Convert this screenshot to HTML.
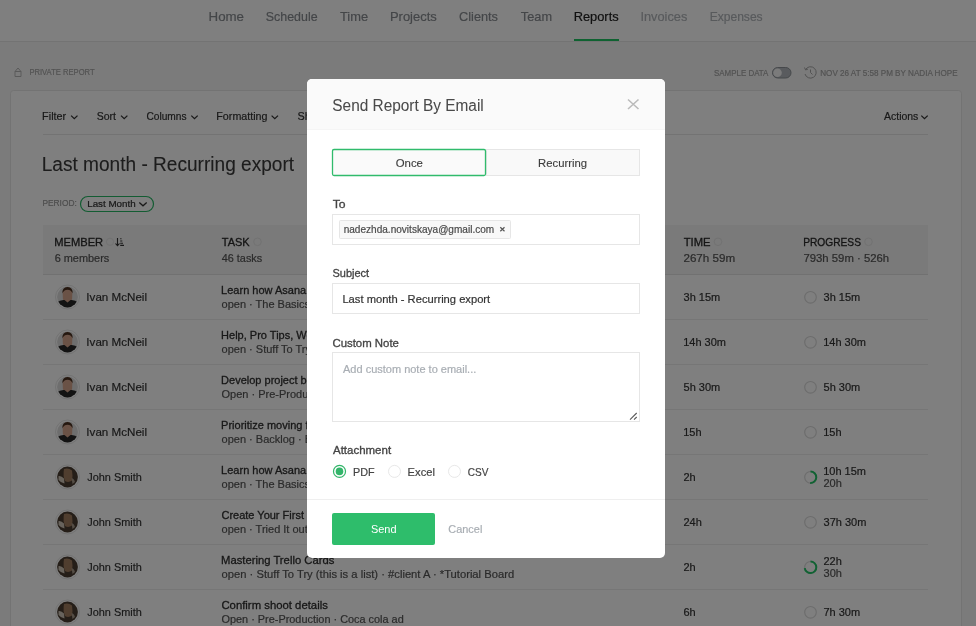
<!DOCTYPE html>
<html><head><meta charset="utf-8"><style>
html,body{margin:0;padding:0;width:976px;height:626px;overflow:hidden;background:#7a7a7a;font-family:"Liberation Sans",sans-serif;}
svg{display:block;will-change:transform}
</style></head><body>
<svg width="976" height="626" viewBox="0 0 976 626" font-family="Liberation Sans, sans-serif"><defs><clipPath id="avc"><circle r="10.4"/></clipPath></defs><rect x="0" y="0" width="976" height="626" fill="#f7f7f7"/>
<rect x="0" y="0" width="976" height="41" fill="#ffffff"/>
<rect x="0" y="41" width="976" height="1" fill="#e6e6e6"/>
<text x="208.54" y="21" font-size="13" fill="#888c91" font-weight="normal" textLength="35.50" lengthAdjust="spacingAndGlyphs" stroke="#888c91" stroke-width="0.2">Home</text>
<text x="265.84" y="21" font-size="13" fill="#888c91" font-weight="normal" textLength="51.72" lengthAdjust="spacingAndGlyphs" stroke="#888c91" stroke-width="0.2">Schedule</text>
<text x="339.94" y="21" font-size="13" fill="#888c91" font-weight="normal" textLength="28.14" lengthAdjust="spacingAndGlyphs" stroke="#888c91" stroke-width="0.2">Time</text>
<text x="389.96" y="21" font-size="13" fill="#888c91" font-weight="normal" textLength="46.82" lengthAdjust="spacingAndGlyphs" stroke="#888c91" stroke-width="0.2">Projects</text>
<text x="459.06" y="21" font-size="13" fill="#888c91" font-weight="normal" textLength="38.90" lengthAdjust="spacingAndGlyphs" stroke="#888c91" stroke-width="0.2">Clients</text>
<text x="520.84" y="21" font-size="13" fill="#888c91" font-weight="normal" textLength="31.19" lengthAdjust="spacingAndGlyphs" stroke="#888c91" stroke-width="0.2">Team</text>
<text x="573.67" y="21" font-size="13" fill="#222222" font-weight="normal" textLength="45.00" lengthAdjust="spacingAndGlyphs" stroke="#222222" stroke-width="0.2">Reports</text>
<text x="640.45" y="21" font-size="13" fill="#b0b4b9" font-weight="normal" textLength="46.88" lengthAdjust="spacingAndGlyphs" stroke="#b0b4b9" stroke-width="0.2">Invoices</text>
<text x="709.63" y="21" font-size="13" fill="#b0b4b9" font-weight="normal" textLength="53.01" lengthAdjust="spacingAndGlyphs" stroke="#b0b4b9" stroke-width="0.2">Expenses</text>
<rect x="574" y="39" width="45" height="2" fill="#1fc462"/>
<text x="29.39" y="75.3" font-size="8.5" fill="#a5a5a5" font-weight="normal" textLength="65.28" lengthAdjust="spacingAndGlyphs" stroke="#a5a5a5" stroke-width="0.2">PRIVATE REPORT</text>
<g fill="none" stroke="#b5b5b5" stroke-width="1"><path d="M15 71.5 L18 68 L21 71.5 V76.5 H15Z M15 71.5 H21"/></g>
<text x="714.04" y="76" font-size="8.5" fill="#a5a5a5" font-weight="normal" textLength="54.39" lengthAdjust="spacingAndGlyphs" stroke="#a5a5a5" stroke-width="0.2">SAMPLE DATA</text>
<rect x="772.5" y="67.5" width="18.5" height="10.5" rx="5.25" fill="#b2b7bc" stroke="#8c9196" stroke-width="1"/><circle cx="777.5" cy="72.75" r="4.3" fill="#f6f6f6"/>
<g fill="none" stroke="#a5a5a5" stroke-width="1"><path d="M805.6 69.5 A5.7 5.7 0 1 1 805 74"/><path d="M804.5 67.5 L805.6 70 L808 69"/><path d="M810.5 69.5 V72.5 L812.5 74.5"/></g>
<text x="820.25" y="76" font-size="8.5" fill="#a5a5a5" font-weight="normal" textLength="137.29" lengthAdjust="spacingAndGlyphs" stroke="#a5a5a5" stroke-width="0.2">NOV 26 AT 5:58 PM BY NADIA HOPE</text>
<rect x="10.5" y="90.5" width="951" height="600" rx="3" fill="#ffffff" stroke="#e6e6e6" stroke-width="1"/>
<text x="42.13" y="120" font-size="10.8" fill="#333333" font-weight="normal" textLength="24.05" lengthAdjust="spacingAndGlyphs" stroke="#333333" stroke-width="0.2">Filter</text>
<path d="M71.1 115.6 L74.3 118.7 L77.5 115.6" fill="none" stroke="#333" stroke-width="1.3"/>
<text x="96.73" y="120" font-size="10.8" fill="#333333" font-weight="normal" textLength="19.27" lengthAdjust="spacingAndGlyphs" stroke="#333333" stroke-width="0.2">Sort</text>
<path d="M121.0 115.6 L124.2 118.7 L127.4 115.6" fill="none" stroke="#333" stroke-width="1.3"/>
<text x="146.39" y="120" font-size="10.8" fill="#333333" font-weight="normal" textLength="40.17" lengthAdjust="spacingAndGlyphs" stroke="#333333" stroke-width="0.2">Columns</text>
<path d="M191.3 115.6 L194.5 118.7 L197.7 115.6" fill="none" stroke="#333" stroke-width="1.3"/>
<text x="216.34" y="120" font-size="10.8" fill="#333333" font-weight="normal" textLength="51.15" lengthAdjust="spacingAndGlyphs" stroke="#333333" stroke-width="0.2">Formatting</text>
<path d="M271.6 115.6 L274.8 118.7 L278.0 115.6" fill="none" stroke="#333" stroke-width="1.3"/>
<text x="884.00" y="120" font-size="10.8" fill="#333333" font-weight="normal" textLength="34.36" lengthAdjust="spacingAndGlyphs" stroke="#333333" stroke-width="0.2">Actions</text>
<path d="M921.3 115.6 L924.5 118.7 L927.7 115.6" fill="none" stroke="#333" stroke-width="1.3"/>
<text x="297.51" y="120" font-size="10.8" fill="#333333" font-weight="normal" stroke="#333333" stroke-width="0.2">Sh</text>
<rect x="43" y="134" width="885" height="1" fill="#e6e6e6"/>
<text x="41.67" y="171" font-size="19.5" fill="#3a3a3a" font-weight="normal" textLength="252.49" lengthAdjust="spacingAndGlyphs" stroke="#3a3a3a" stroke-width="0.1">Last month - Recurring export</text>
<text x="42.43" y="206" font-size="8.7" fill="#9a9a9a" font-weight="normal" textLength="34.34" lengthAdjust="spacingAndGlyphs" stroke="#9a9a9a" stroke-width="0.2">PERIOD:</text>
<rect x="80.5" y="196.5" width="73" height="15" rx="7.5" fill="#ffffff" stroke="#26b864" stroke-width="1.2"/>
<text x="87.22" y="206.6" font-size="9.6" fill="#333333" font-weight="normal" textLength="48.44" lengthAdjust="spacingAndGlyphs" stroke="#333333" stroke-width="0.2">Last Month</text>
<path d="M139.3 202.6 L143 205.8 L146.7 202.6" fill="none" stroke="#333" stroke-width="1.3"/>
<rect x="43" y="225" width="885" height="49" fill="#f4f4f4"/>
<rect x="43" y="274" width="885" height="1" fill="#e3e3e3"/>
<text x="54.31" y="245.6" font-size="11.8" fill="#2a2a2a" font-weight="normal" textLength="48.84" lengthAdjust="spacingAndGlyphs" stroke="#2a2a2a" stroke-width="0.32">MEMBER</text>
<circle cx="110" cy="241.8" r="3.6" fill="none" stroke="#e4e4e4" stroke-width="1"/>
<path d="M117.5 238 V245.5 M115.5 243.5 L117.5 245.7 L119.5 243.5" fill="none" stroke="#333" stroke-width="1.1"/><path d="M120.2 238.8 H121.5 M120.2 241 H122.3 M120.2 243.2 H123 M120.2 245.4 H124" stroke="#333" stroke-width="1.1"/>
<circle cx="257.5" cy="241.8" r="3.8" fill="none" stroke="#e4e4e4" stroke-width="1"/>
<circle cx="718" cy="241.8" r="3.8" fill="none" stroke="#e4e4e4" stroke-width="1"/>
<circle cx="868.5" cy="241.8" r="3.8" fill="none" stroke="#e4e4e4" stroke-width="1"/>
<text x="54.65" y="262.3" font-size="11" fill="#555555" font-weight="normal" textLength="54.65" lengthAdjust="spacingAndGlyphs" stroke="#555555" stroke-width="0.2">6 members</text>
<text x="221.78" y="245.6" font-size="11.8" fill="#2a2a2a" font-weight="normal" textLength="27.86" lengthAdjust="spacingAndGlyphs" stroke="#2a2a2a" stroke-width="0.32">TASK</text>
<text x="221.78" y="262.3" font-size="11" fill="#555555" font-weight="normal" textLength="40.39" lengthAdjust="spacingAndGlyphs" stroke="#555555" stroke-width="0.2">46 tasks</text>
<text x="683.68" y="245.6" font-size="11.8" fill="#2a2a2a" font-weight="normal" textLength="26.82" lengthAdjust="spacingAndGlyphs" stroke="#2a2a2a" stroke-width="0.32">TIME</text>
<text x="683.42" y="262" font-size="11" fill="#555555" font-weight="normal" textLength="51.82" lengthAdjust="spacingAndGlyphs" stroke="#555555" stroke-width="0.2">267h 59m</text>
<text x="803.18" y="245.6" font-size="11.8" fill="#2a2a2a" font-weight="normal" textLength="57.81" lengthAdjust="spacingAndGlyphs" stroke="#2a2a2a" stroke-width="0.32">PROGRESS</text>
<text x="803.43" y="262" font-size="11" fill="#555555" font-weight="normal" textLength="85.72" lengthAdjust="spacingAndGlyphs" stroke="#555555" stroke-width="0.2">793h 59m · 526h</text>
<g transform="translate(67.5 297)">
<circle r="12" fill="#ffffff" stroke="#e6e6e6" stroke-width="1"/>
<g clip-path="url(#avc)"><rect x="-11" y="-11" width="22" height="22" fill="#dcdcdc"/><path d="M-4.8 -3 Q-5 -9.5 0 -9.8 Q5 -9.5 4.8 -3 L4.6 2 Q3.5 5.2 0 5.5 Q-3.5 5.2 -4.6 2Z" fill="#d4a48c"/><path d="M-5 -3.5 Q-5.5 -10 0 -10 Q5.5 -10 5 -3.5 Q4 -7 0 -7.3 Q-4 -7 -5 -3.5Z" fill="#4a3020"/><path d="M-11 11 L-11 6 Q-8 2.5 -3 3 L0 5.5 L3 3 Q8 2.5 11 6 L11 11Z" fill="#262626"/></g>
</g>
<text x="86.36" y="301" font-size="11.8" fill="#333333" font-weight="normal" textLength="60.64" lengthAdjust="spacingAndGlyphs" stroke="#333333" stroke-width="0.2">Ivan McNeil</text>
<text x="221.12" y="294" font-size="11" fill="#303030" font-weight="normal" stroke="#303030" stroke-width="0.3">Learn how Asana works</text>
<text x="221.56" y="308" font-size="11" fill="#555555" font-weight="normal" stroke="#555555" stroke-width="0.2">open · The Basics · Asana</text>
<text x="683.56" y="301" font-size="11" fill="#333333" font-weight="normal" stroke="#333333" stroke-width="0.2">3h 15m</text>
<circle cx="810.5" cy="297.3" r="5.8" fill="none" stroke="#dadada" stroke-width="1.2"/>
<text x="823.56" y="301" font-size="11" fill="#333333" font-weight="normal" stroke="#333333" stroke-width="0.2">3h 15m</text>
<rect x="43" y="319" width="885" height="1" fill="#ededed"/>
<g transform="translate(67.5 342)">
<circle r="12" fill="#ffffff" stroke="#e6e6e6" stroke-width="1"/>
<g clip-path="url(#avc)"><rect x="-11" y="-11" width="22" height="22" fill="#dcdcdc"/><path d="M-4.8 -3 Q-5 -9.5 0 -9.8 Q5 -9.5 4.8 -3 L4.6 2 Q3.5 5.2 0 5.5 Q-3.5 5.2 -4.6 2Z" fill="#d4a48c"/><path d="M-5 -3.5 Q-5.5 -10 0 -10 Q5.5 -10 5 -3.5 Q4 -7 0 -7.3 Q-4 -7 -5 -3.5Z" fill="#4a3020"/><path d="M-11 11 L-11 6 Q-8 2.5 -3 3 L0 5.5 L3 3 Q8 2.5 11 6 L11 11Z" fill="#262626"/></g>
</g>
<text x="86.36" y="346" font-size="11.8" fill="#333333" font-weight="normal" textLength="60.64" lengthAdjust="spacingAndGlyphs" stroke="#333333" stroke-width="0.2">Ivan McNeil</text>
<text x="221.12" y="339" font-size="11" fill="#303030" font-weight="normal" stroke="#303030" stroke-width="0.3">Help, Pro Tips, Workflows</text>
<text x="221.56" y="353" font-size="11" fill="#555555" font-weight="normal" stroke="#555555" stroke-width="0.2">open · Stuff To Try · Asana</text>
<text x="683.17" y="346" font-size="11" fill="#333333" font-weight="normal" stroke="#333333" stroke-width="0.2">14h 30m</text>
<circle cx="810.5" cy="342.3" r="5.8" fill="none" stroke="#dadada" stroke-width="1.2"/>
<text x="823.17" y="346" font-size="11" fill="#333333" font-weight="normal" stroke="#333333" stroke-width="0.2">14h 30m</text>
<rect x="43" y="364" width="885" height="1" fill="#ededed"/>
<g transform="translate(67.5 387)">
<circle r="12" fill="#ffffff" stroke="#e6e6e6" stroke-width="1"/>
<g clip-path="url(#avc)"><rect x="-11" y="-11" width="22" height="22" fill="#dcdcdc"/><path d="M-4.8 -3 Q-5 -9.5 0 -9.8 Q5 -9.5 4.8 -3 L4.6 2 Q3.5 5.2 0 5.5 Q-3.5 5.2 -4.6 2Z" fill="#d4a48c"/><path d="M-5 -3.5 Q-5.5 -10 0 -10 Q5.5 -10 5 -3.5 Q4 -7 0 -7.3 Q-4 -7 -5 -3.5Z" fill="#4a3020"/><path d="M-11 11 L-11 6 Q-8 2.5 -3 3 L0 5.5 L3 3 Q8 2.5 11 6 L11 11Z" fill="#262626"/></g>
</g>
<text x="86.36" y="391" font-size="11.8" fill="#333333" font-weight="normal" textLength="60.64" lengthAdjust="spacingAndGlyphs" stroke="#333333" stroke-width="0.2">Ivan McNeil</text>
<text x="221.12" y="384" font-size="11" fill="#303030" font-weight="normal" stroke="#303030" stroke-width="0.3">Develop project brief</text>
<text x="221.50" y="398" font-size="11" fill="#555555" font-weight="normal" stroke="#555555" stroke-width="0.2">Open · Pre-Production · Coca</text>
<text x="683.56" y="391" font-size="11" fill="#333333" font-weight="normal" stroke="#333333" stroke-width="0.2">5h 30m</text>
<circle cx="810.5" cy="387.3" r="5.8" fill="none" stroke="#dadada" stroke-width="1.2"/>
<text x="823.56" y="391" font-size="11" fill="#333333" font-weight="normal" stroke="#333333" stroke-width="0.2">5h 30m</text>
<rect x="43" y="409" width="885" height="1" fill="#ededed"/>
<g transform="translate(67.5 432)">
<circle r="12" fill="#ffffff" stroke="#e6e6e6" stroke-width="1"/>
<g clip-path="url(#avc)"><rect x="-11" y="-11" width="22" height="22" fill="#dcdcdc"/><path d="M-4.8 -3 Q-5 -9.5 0 -9.8 Q5 -9.5 4.8 -3 L4.6 2 Q3.5 5.2 0 5.5 Q-3.5 5.2 -4.6 2Z" fill="#d4a48c"/><path d="M-5 -3.5 Q-5.5 -10 0 -10 Q5.5 -10 5 -3.5 Q4 -7 0 -7.3 Q-4 -7 -5 -3.5Z" fill="#4a3020"/><path d="M-11 11 L-11 6 Q-8 2.5 -3 3 L0 5.5 L3 3 Q8 2.5 11 6 L11 11Z" fill="#262626"/></g>
</g>
<text x="86.36" y="436" font-size="11.8" fill="#333333" font-weight="normal" textLength="60.64" lengthAdjust="spacingAndGlyphs" stroke="#333333" stroke-width="0.2">Ivan McNeil</text>
<text x="221.12" y="429" font-size="11" fill="#303030" font-weight="normal" stroke="#303030" stroke-width="0.3">Prioritize moving forward</text>
<text x="221.56" y="443" font-size="11" fill="#555555" font-weight="normal" stroke="#555555" stroke-width="0.2">open · Backlog · Board</text>
<text x="683.17" y="436" font-size="11" fill="#333333" font-weight="normal" stroke="#333333" stroke-width="0.2">15h</text>
<circle cx="810.5" cy="432.3" r="5.8" fill="none" stroke="#dadada" stroke-width="1.2"/>
<text x="823.17" y="436" font-size="11" fill="#333333" font-weight="normal" stroke="#333333" stroke-width="0.2">15h</text>
<rect x="43" y="454" width="885" height="1" fill="#ededed"/>
<g transform="translate(67.5 477)">
<circle r="12" fill="#ffffff" stroke="#e6e6e6" stroke-width="1"/>
<g clip-path="url(#avc)"><rect x="-11" y="-11" width="22" height="22" fill="#4a3c30"/><path d="M-3.5 -8 Q1 -9.5 4.5 -6.5 Q5.5 -1 4.5 3.5 Q1 6 -2.5 4 Q-4.8 -1 -3.5 -8Z" fill="#a07c5e"/><path d="M-9 -1 Q-6 -1.5 -3.5 1.5 L-3 6.5 Q-6.5 6 -9 3Z" fill="#d0c6b8"/><path d="M4 1 Q6.5 1.5 7.5 5 L5 7 Z" fill="#a89a8a"/></g>
</g>
<text x="87.24" y="481" font-size="11.8" fill="#333333" font-weight="normal" textLength="54.50" lengthAdjust="spacingAndGlyphs" stroke="#333333" stroke-width="0.2">John Smith</text>
<text x="221.12" y="474" font-size="11" fill="#303030" font-weight="normal" stroke="#303030" stroke-width="0.3">Learn how Asana works</text>
<text x="221.56" y="488" font-size="11" fill="#555555" font-weight="normal" stroke="#555555" stroke-width="0.2">open · The Basics · Asana</text>
<text x="683.45" y="481" font-size="11" fill="#333333" font-weight="normal" stroke="#333333" stroke-width="0.2">2h</text>
<circle cx="810.5" cy="477.3" r="5.8" fill="none" stroke="#dadada" stroke-width="1.2"/>
<path d="M810.5 471.50 A5.8 5.8 0 1 1 810.14 483.09" fill="none" stroke="#22c466" stroke-width="2"/>
<text x="823.17" y="474.7" font-size="11" fill="#333333" font-weight="normal" stroke="#333333" stroke-width="0.2">10h 15m</text>
<text x="823.45" y="486.5" font-size="11" fill="#555555" font-weight="normal" stroke="#555555" stroke-width="0.2">20h</text>
<rect x="43" y="499" width="885" height="1" fill="#ededed"/>
<g transform="translate(67.5 522)">
<circle r="12" fill="#ffffff" stroke="#e6e6e6" stroke-width="1"/>
<g clip-path="url(#avc)"><rect x="-11" y="-11" width="22" height="22" fill="#4a3c30"/><path d="M-3.5 -8 Q1 -9.5 4.5 -6.5 Q5.5 -1 4.5 3.5 Q1 6 -2.5 4 Q-4.8 -1 -3.5 -8Z" fill="#a07c5e"/><path d="M-9 -1 Q-6 -1.5 -3.5 1.5 L-3 6.5 Q-6.5 6 -9 3Z" fill="#d0c6b8"/><path d="M4 1 Q6.5 1.5 7.5 5 L5 7 Z" fill="#a89a8a"/></g>
</g>
<text x="87.24" y="526" font-size="11.8" fill="#333333" font-weight="normal" textLength="54.50" lengthAdjust="spacingAndGlyphs" stroke="#333333" stroke-width="0.2">John Smith</text>
<text x="221.45" y="519" font-size="11" fill="#303030" font-weight="normal" stroke="#303030" stroke-width="0.3">Create Your First Board</text>
<text x="221.56" y="533" font-size="11" fill="#555555" font-weight="normal" stroke="#555555" stroke-width="0.2">open · Tried It out · Board</text>
<text x="683.45" y="526" font-size="11" fill="#333333" font-weight="normal" stroke="#333333" stroke-width="0.2">24h</text>
<circle cx="810.5" cy="522.3" r="5.8" fill="none" stroke="#dadada" stroke-width="1.2"/>
<text x="823.56" y="526" font-size="11" fill="#333333" font-weight="normal" stroke="#333333" stroke-width="0.2">37h 30m</text>
<rect x="43" y="544" width="885" height="1" fill="#ededed"/>
<g transform="translate(67.5 567)">
<circle r="12" fill="#ffffff" stroke="#e6e6e6" stroke-width="1"/>
<g clip-path="url(#avc)"><rect x="-11" y="-11" width="22" height="22" fill="#4a3c30"/><path d="M-3.5 -8 Q1 -9.5 4.5 -6.5 Q5.5 -1 4.5 3.5 Q1 6 -2.5 4 Q-4.8 -1 -3.5 -8Z" fill="#a07c5e"/><path d="M-9 -1 Q-6 -1.5 -3.5 1.5 L-3 6.5 Q-6.5 6 -9 3Z" fill="#d0c6b8"/><path d="M4 1 Q6.5 1.5 7.5 5 L5 7 Z" fill="#a89a8a"/></g>
</g>
<text x="87.24" y="571" font-size="11.8" fill="#333333" font-weight="normal" textLength="54.50" lengthAdjust="spacingAndGlyphs" stroke="#333333" stroke-width="0.2">John Smith</text>
<text x="221.10" y="564" font-size="11" fill="#303030" font-weight="normal" textLength="113.19" lengthAdjust="spacingAndGlyphs" stroke="#303030" stroke-width="0.3">Mastering Trello Cards</text>
<text x="221.55" y="578" font-size="11" fill="#555555" font-weight="normal" textLength="292.57" lengthAdjust="spacingAndGlyphs" stroke="#555555" stroke-width="0.2">open · Stuff To Try (this is a list) · #client A · *Tutorial Board</text>
<text x="683.45" y="571" font-size="11" fill="#333333" font-weight="normal" stroke="#333333" stroke-width="0.2">2h</text>
<circle cx="810.5" cy="567.3" r="5.8" fill="none" stroke="#dadada" stroke-width="1.2"/>
<path d="M810.5 561.50 A5.8 5.8 0 1 1 804.75 568.03" fill="none" stroke="#22c466" stroke-width="2"/>
<text x="823.45" y="564.7" font-size="11" fill="#333333" font-weight="normal" stroke="#333333" stroke-width="0.2">22h</text>
<text x="823.56" y="576.5" font-size="11" fill="#555555" font-weight="normal" stroke="#555555" stroke-width="0.2">30h</text>
<rect x="43" y="589" width="885" height="1" fill="#ededed"/>
<g transform="translate(67.5 612)">
<circle r="12" fill="#ffffff" stroke="#e6e6e6" stroke-width="1"/>
<g clip-path="url(#avc)"><rect x="-11" y="-11" width="22" height="22" fill="#4a3c30"/><path d="M-3.5 -8 Q1 -9.5 4.5 -6.5 Q5.5 -1 4.5 3.5 Q1 6 -2.5 4 Q-4.8 -1 -3.5 -8Z" fill="#a07c5e"/><path d="M-9 -1 Q-6 -1.5 -3.5 1.5 L-3 6.5 Q-6.5 6 -9 3Z" fill="#d0c6b8"/><path d="M4 1 Q6.5 1.5 7.5 5 L5 7 Z" fill="#a89a8a"/></g>
</g>
<text x="87.24" y="616" font-size="11.8" fill="#333333" font-weight="normal" textLength="54.50" lengthAdjust="spacingAndGlyphs" stroke="#333333" stroke-width="0.2">John Smith</text>
<text x="221.43" y="609" font-size="11" fill="#303030" font-weight="normal" textLength="106.44" lengthAdjust="spacingAndGlyphs" stroke="#303030" stroke-width="0.3">Confirm shoot details</text>
<text x="221.51" y="623" font-size="11" fill="#555555" font-weight="normal" textLength="182.21" lengthAdjust="spacingAndGlyphs" stroke="#555555" stroke-width="0.2">Open · Pre-Production · Coca cola ad</text>
<text x="683.45" y="616" font-size="11" fill="#333333" font-weight="normal" stroke="#333333" stroke-width="0.2">6h</text>
<circle cx="810.5" cy="612.3" r="5.8" fill="none" stroke="#dadada" stroke-width="1.2"/>
<text x="823.45" y="616" font-size="11" fill="#333333" font-weight="normal" stroke="#333333" stroke-width="0.2">7h 30m</text>
<rect x="0" y="0" width="976" height="626" fill="#000" fill-opacity="0.5"/>
<rect x="307" y="79" width="358" height="479" rx="5" fill="#ffffff"/>
<path d="M307 129 V84 A5 5 0 0 1 312 79 H660 A5 5 0 0 1 665 84 V129Z" fill="#fafafa"/>
<rect x="307" y="129" width="358" height="1" fill="#f5f5f5"/>
<text x="332.31" y="110.5" font-size="16" fill="#4a4a4a" font-weight="normal" textLength="151.44" lengthAdjust="spacingAndGlyphs" stroke="#4a4a4a" stroke-width="0.05">Send Report By Email</text>
<path d="M628 99.5 L638.5 109 M638.5 99.5 L628 109" stroke="#bbbbbb" stroke-width="1.6"/>
<rect x="486.5" y="149.5" width="153" height="26" fill="#f9f9f9" stroke="#e6e6e6" stroke-width="1"/>
<rect x="332.5" y="149.5" width="153" height="26" rx="1.5" fill="#fafafa" stroke="#30bb6c" stroke-width="1.3"/>
<text x="395.69" y="166.6" font-size="10.8" fill="#3d3d3d" font-weight="normal" textLength="27.23" lengthAdjust="spacingAndGlyphs" stroke="#3d3d3d" stroke-width="0.12">Once</text>
<text x="538.10" y="166.6" font-size="10.8" fill="#3d3d3d" font-weight="normal" textLength="48.94" lengthAdjust="spacingAndGlyphs" stroke="#3d3d3d" stroke-width="0.12">Recurring</text>
<text x="332.66" y="208.3" font-size="11.5" fill="#444444" font-weight="normal" textLength="12.84" lengthAdjust="spacingAndGlyphs" stroke="#444444" stroke-width="0.32">To</text>
<rect x="332.5" y="214.5" width="307" height="30" fill="#fff" stroke="#e6e6e6" stroke-width="1"/>
<rect x="339.5" y="220.5" width="171" height="18" rx="1" fill="#f8f8f8" stroke="#e6e6e6" stroke-width="1"/>
<text x="343.65" y="232.6" font-size="10.3" fill="#4a4a4a" font-weight="normal" textLength="150.58" lengthAdjust="spacingAndGlyphs" stroke="#4a4a4a" stroke-width="0.2">nadezhda.novitskaya@gmail.com</text>
<path d="M500.3 227.3 L504.5 231.3 M504.5 227.3 L500.3 231.3" stroke="#555" stroke-width="1.2"/>
<text x="332.51" y="276.8" font-size="11.5" fill="#444444" font-weight="normal" textLength="36.55" lengthAdjust="spacingAndGlyphs" stroke="#444444" stroke-width="0.32">Subject</text>
<rect x="332.5" y="283.5" width="307" height="30" fill="#fff" stroke="#e6e6e6" stroke-width="1"/>
<text x="342.41" y="303.2" font-size="11.5" fill="#333333" font-weight="normal" textLength="147.79" lengthAdjust="spacingAndGlyphs" stroke="#333333" stroke-width="0.2">Last month - Recurring export</text>
<text x="332.43" y="346.6" font-size="11.5" fill="#444444" font-weight="normal" textLength="66.49" lengthAdjust="spacingAndGlyphs" stroke="#444444" stroke-width="0.32">Custom Note</text>
<rect x="332.5" y="352.5" width="307" height="69" fill="#fff" stroke="#e6e6e6" stroke-width="1"/>
<text x="343.00" y="373" font-size="11" fill="#a9aeb4" font-weight="normal" stroke="#a9aeb4" stroke-width="0.2">Add custom note to email...</text>
<path d="M630 419.6 L636.7 413 M634 419.6 L636.7 417" stroke="#5a5a5a" stroke-width="1.1"/>
<text x="333.00" y="453.5" font-size="11.5" fill="#444444" font-weight="normal" textLength="58.09" lengthAdjust="spacingAndGlyphs" stroke="#444444" stroke-width="0.32">Attachment</text>
<circle cx="339.5" cy="471.4" r="6" fill="#fff" stroke="#33b56a" stroke-width="1.2"/><circle cx="339.5" cy="471.4" r="3.8" fill="#33b56a"/>
<text x="352.94" y="476" font-size="11.5" fill="#444444" font-weight="normal" textLength="21.60" lengthAdjust="spacingAndGlyphs" stroke="#444444" stroke-width="0.2">PDF</text>
<circle cx="394.5" cy="471.4" r="6" fill="#fff" stroke="#e8e8e8" stroke-width="1"/>
<text x="407.61" y="476" font-size="11.5" fill="#444444" font-weight="normal" textLength="27.32" lengthAdjust="spacingAndGlyphs" stroke="#444444" stroke-width="0.2">Excel</text>
<circle cx="454.5" cy="471.4" r="6" fill="#fff" stroke="#e8e8e8" stroke-width="1"/>
<text x="467.70" y="476" font-size="11.5" fill="#444444" font-weight="normal" textLength="20.67" lengthAdjust="spacingAndGlyphs" stroke="#444444" stroke-width="0.2">CSV</text>
<rect x="307" y="499" width="358" height="1" fill="#efefef"/>
<rect x="332" y="513" width="103" height="32" rx="2" fill="#2ebd6b"/>
<text x="370.91" y="532.8" font-size="11.5" fill="#ffffff" font-weight="normal" textLength="25.61" lengthAdjust="spacingAndGlyphs">Send</text>
<text x="448.35" y="532.8" font-size="11.5" fill="#a9aeb4" font-weight="normal" textLength="33.99" lengthAdjust="spacingAndGlyphs" stroke="#a9aeb4" stroke-width="0.2">Cancel</text></svg>
</body></html>
